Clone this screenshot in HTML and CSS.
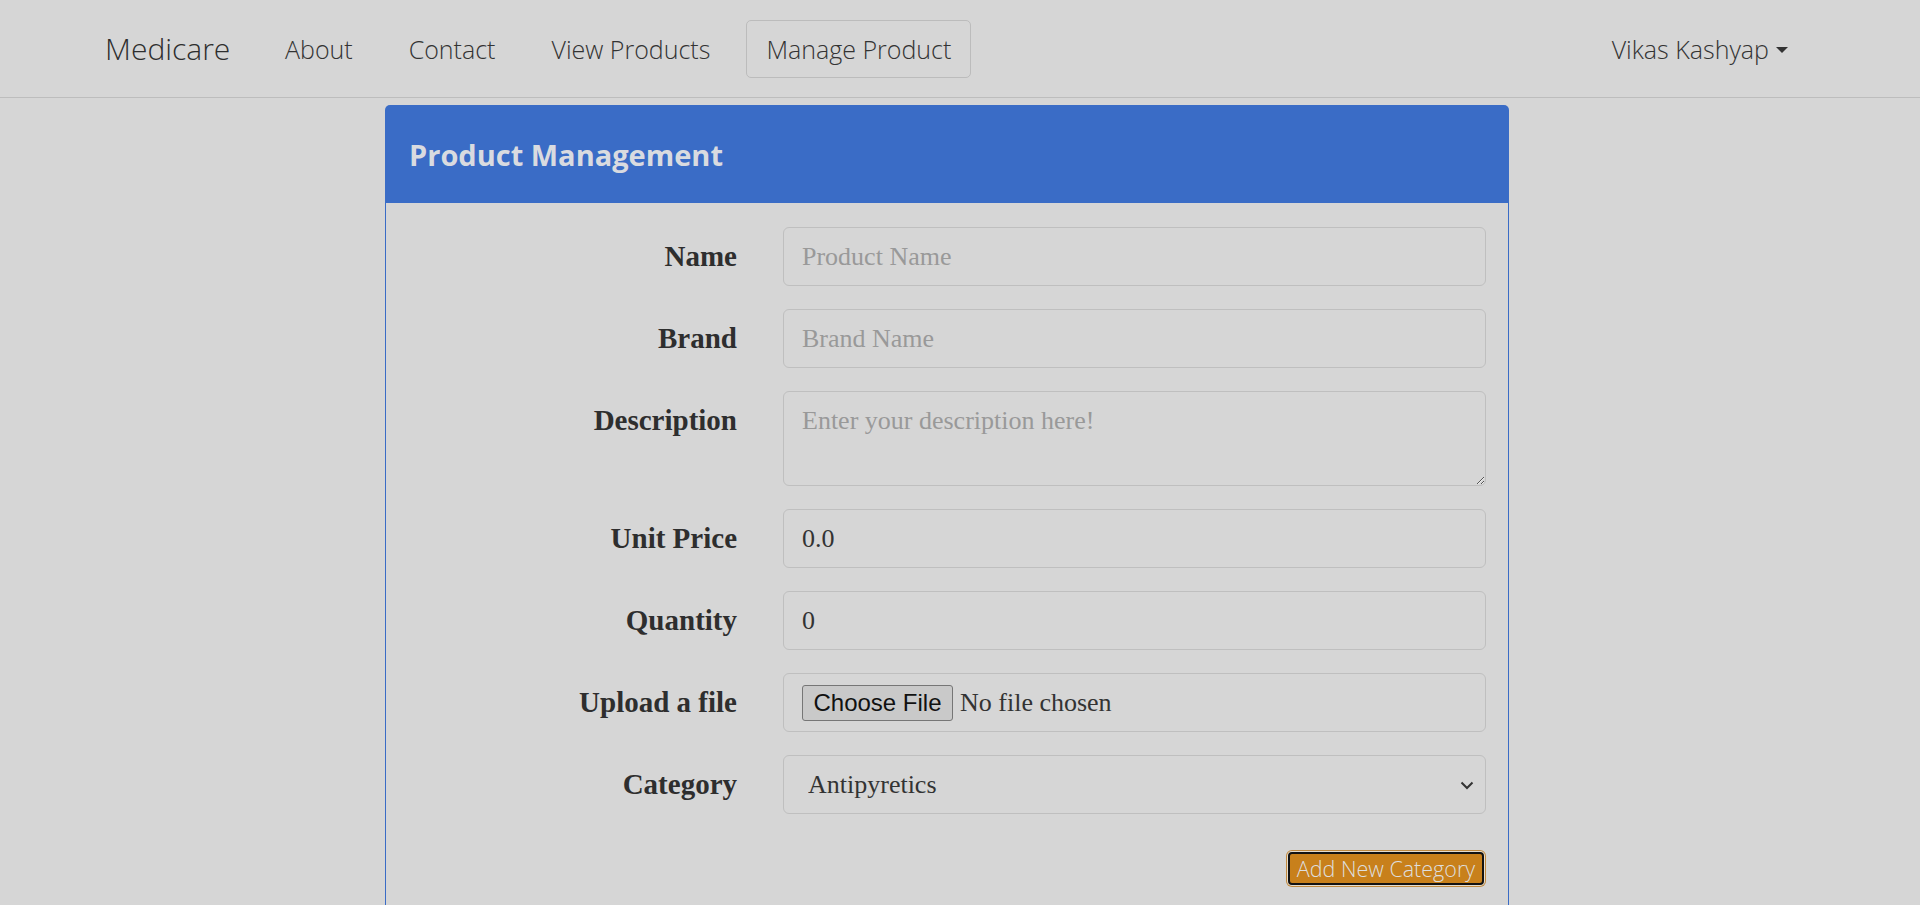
FILE: index.html
```html
<!DOCTYPE html>
<html lang="en">
<head>
<meta charset="utf-8">
<title>Medicare - Manage Product</title>
<link rel="stylesheet" href="styles.css">
</head>
<body>
<nav class="navbar">
  <a class="brand" href="#">Medicare</a>
  <ul class="nav-links">
    <li><a href="#">About</a></li>
    <li><a href="#">Contact</a></li>
    <li><a href="#">View Products</a></li>
    <li class="active"><a href="#">Manage Product</a></li>
  </ul>
  <a class="user" href="#">Vikas Kashyap <span class="caret"></span></a>
</nav>

<main class="panel">
  <div class="panel-heading">
    <h4 class="panel-title">Product Management</h4>
  </div>
  <div class="panel-body">
    <form class="form-grid">
      <label class="form-label" for="name">Name</label>
      <input class="form-control" id="name" type="text" placeholder="Product Name">

      <label class="form-label" for="brand">Brand</label>
      <input class="form-control" id="brand" type="text" placeholder="Brand Name">

      <label class="form-label" for="desc">Description</label>
      <textarea class="form-control textarea" id="desc" placeholder="Enter your description here!"></textarea>

      <label class="form-label" for="price">Unit Price</label>
      <input class="form-control" id="price" type="text" value="0.0">

      <label class="form-label" for="qty">Quantity</label>
      <input class="form-control" id="qty" type="text" value="0">

      <label class="form-label" for="file">Upload a file</label>
      <div class="form-control file-control">
        <button type="button" class="file-btn" id="file">Choose File</button>
        <span class="file-text">No file chosen</span>
      </div>

      <label class="form-label" for="cat">Category</label>
      <div class="select-wrap">
        <select class="form-control select" id="cat">
          <option>Antipyretics</option>
        </select>
        <svg class="chevron" width="14" height="9" viewBox="0 0 14 9"><path d="M1.5 1.5 L7 7 L12.5 1.5" fill="none" stroke="#333" stroke-width="2"/></svg>
      </div>

      <div class="actions">
        <button type="button" class="btn-warning">Add New Category</button>
      </div>
    </form>
  </div>
</main>
</body>
</html>
```
FILE: styles.css
```css
* { box-sizing: border-box; }

html, body {
  margin: 0;
  padding: 0;
  background: #d6d6d6;
  color: #333;
  font-family: "Liberation Serif", "DejaVu Serif", serif;
  overflow: hidden;
}

a { text-decoration: none; color: #333; }

/* ---------- navbar ---------- */
.navbar {
  display: flex;
  align-items: center;
  height: 98px;
  padding: 0 132px 0 105px;
  border-bottom: 1px solid #bdbdbd;
  font-family: "Open Sans", "Lato", sans-serif;
  font-weight: 350;
}

.brand {
  flex: 0 0 160px;
  font-size: 30px;
  font-weight: 300;
  color: #2e2e2e;
}

.nav-links {
  display: flex;
  gap: 16px;
  list-style: none;
  margin: 0;
  padding: 0;
}

.nav-links a {
  display: flex;
  align-items: center;
  height: 58px;
  padding: 0 19px;
  font-size: 25px;
  color: #333;
  border: 1px solid transparent;
  border-radius: 5px;
}

.nav-links .active a {
  border-color: #bcbcbc;
}

.user {
  margin-left: auto;
  font-size: 25px;
  display: flex;
  align-items: center;
}

.caret {
  display: inline-block;
  width: 0;
  height: 0;
  margin-left: 7px;
  margin-top: 3px;
  border-left: 6px solid transparent;
  border-right: 6px solid transparent;
  border-top: 6px solid #333;
}

/* ---------- panel ---------- */
.panel {
  display: block;
  width: 1124px;
  margin: 7px 0 0 385px;
}

.panel-heading {
  display: flex;
  align-items: center;
  height: 98px;
  padding: 0 24px;
  background: #3a6cc6;
  border-radius: 5px 5px 0 0;
}

.panel-title {
  margin: 0;
  font-family: "Open Sans", "Lato", sans-serif;
  font-weight: 700;
  font-size: 29px;
  color: #d9dbe0;
}

.panel-body {
  border: 1px solid #3a6cc6;
  border-top: none;
  padding: 24px 22px 40px 0;
}

.form-grid {
  display: grid;
  grid-template-columns: 351px 703px;
  column-gap: 46px;
  row-gap: 23px;
  margin: 0;
}

.form-label {
  text-align: right;
  font-weight: 700;
  font-size: 29px;
  line-height: 59px;
  color: #2e2e2e;
}

.form-control {
  display: block;
  width: 100%;
  height: 59px;
  margin: 0;
  padding: 0 18px;
  border: 1px solid #bfbfbf;
  border-radius: 6px;
  background: transparent;
  font-family: "Liberation Serif", "DejaVu Serif", serif;
  font-size: 26px;
  color: #333;
  outline: none;
}

.form-control::placeholder { color: #999; }

.textarea {
  height: 95px;
  padding: 12px 18px;
  line-height: 1.3;
  resize: vertical;
}

.file-control {
  display: flex;
  align-items: center;
  gap: 7px;
}

.file-btn {
  width: 151px;
  height: 36px;
  padding: 0;
  border: 1px solid #767676;
  border-radius: 3px;
  background: #c9c9c9;
  font-family: "Liberation Sans", Arial, sans-serif;
  font-size: 24px;
  color: #111;
}

.file-text {
  font-size: 26px;
  color: #333;
}

.select-wrap {
  position: relative;
}

.select {
  appearance: none;
  -webkit-appearance: none;
  padding-left: 24px;
}

.chevron {
  position: absolute;
  right: 12px;
  top: 26px;
}

.actions {
  grid-column: 2;
  display: flex;
  justify-content: flex-end;
  margin-top: 13px;
  padding: 2px;
}

.btn-warning {
  height: 33px;
  width: 196px;
  padding: 0;
  border: 2px solid #121212;
  border-radius: 4px;
  background: #c8801b;
  box-shadow: 0 0 0 1px #e5dccd, 0 0 0 2px #c08a40;
  font-family: "Open Sans", "Lato", sans-serif;
  font-weight: 350;
  font-size: 21.5px;
  color: #dedede;
  white-space: nowrap;
}
```
